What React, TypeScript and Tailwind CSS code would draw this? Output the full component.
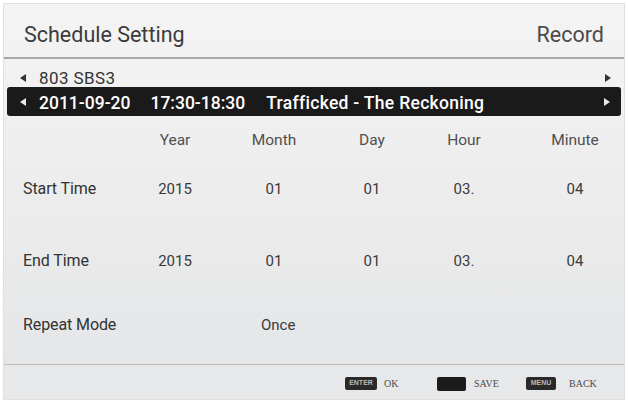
// Schedule setting screen (TV recorder menu)

const LeftArrow = ({ className }: { className: string }) => (
  <svg width="6" height="8" viewBox="0 0 6 8" className={className}>
    <path d="M6 0 L0 4 L6 8 Z" fill="currentColor" />
  </svg>
);

const RightArrow = ({ className }: { className: string }) => (
  <svg width="6" height="8" viewBox="0 0 6 8" className={className}>
    <path d="M0 0 L6 4 L0 8 Z" fill="currentColor" />
  </svg>
);

// Types
interface Row {
  label: string;
  values: string[];
  rowClass: string;
}

const rows: Row[] = [
  { label: "Start Time", values: ["2015", "01", "01", "03.", "04"], rowClass: "mt-[29px]" },
  { label: "End Time", values: ["2015", "01", "01", "03.", "04"], rowClass: "mt-[52px]" },
];

const Cells = ({ values, textClass }: { values: string[]; textClass: string }) => (
  <>
    <div className={`w-[100px] shrink-0 text-center ${textClass}`}>{values[0]}</div>
    <div className={`w-[98px] shrink-0 text-center ${textClass}`}>{values[1]}</div>
    <div className={`w-[98px] shrink-0 text-center ${textClass}`}>{values[2]}</div>
    <div className={`w-[86px] shrink-0 text-center ${textClass}`}>{values[3]}</div>
    <div className={`ml-[38px] w-[60px] shrink-0 text-center ${textClass}`}>{values[4]}</div>
  </>
);

const App = () => {
  return (
    <div className="w-[628px] h-[406px] bg-white p-[3px] pb-[6px] font-['Roboto',sans-serif] overflow-hidden">
      <div className="h-full flex flex-col bg-gradient-to-b from-[#f4f4f4] via-[#ececec] to-[#e3e5e7] border border-[#e0e0e0]">
        {/* Header */}
        <div className="h-[55px] shrink-0 flex items-start justify-between pt-[18px] pl-[20px] pr-[20px] border-b-2 border-[#a8a8a8]">
          <span className="text-[21.5px] leading-[26px] text-[#3b3b3b]">Schedule Setting</span>
          <span className="text-[21.5px] leading-[26px] text-[#4a4a4a]">Record</span>
        </div>

        {/* Channel row */}
        <div className="mt-[10px] h-[18px] flex items-center pl-[16px] pr-[13px]">
          <LeftArrow className="text-[#333]" />
          <span className="ml-[13px] text-[17px] leading-[20px] tracking-[0.4px] text-[#333]">803 SBS3</span>
          <RightArrow className="ml-auto text-[#333]" />
        </div>

        {/* Selected programme */}
        <div className="mx-[3px] h-[29px] shrink-0 flex items-center rounded-[3px] bg-[#1b1a1a] pl-[13px] pr-[11px] text-white">
          <LeftArrow className="text-[#e8e8e8]" />
          <span className="ml-[13px] text-[17.5px] font-medium leading-[20px] pt-[2px]">2011-09-20</span>
          <span className="ml-[20px] text-[17.5px] font-medium leading-[20px] pt-[2px]">17:30-18:30</span>
          <span className="ml-[21px] text-[17.5px] font-medium leading-[20px] pt-[2px] tracking-[0.3px]">Trafficked - The Reckoning</span>
          <RightArrow className="ml-auto text-[#e8e8e8]" />
        </div>

        {/* Column headers */}
        <div className="mt-[14px] h-[20px] flex items-center pl-[19px]">
          <div className="w-[102px] shrink-0" />
          <Cells values={["Year", "Month", "Day", "Hour", "Minute"]} textClass="text-[15.5px] leading-[20px] text-[#505050]" />
        </div>

        {/* Start / End rows */}
        {rows.map((row) => (
          <div key={row.label} className={`${row.rowClass} h-[20px] flex items-center pl-[19px]`}>
            <div className="w-[102px] shrink-0 text-[16px] leading-[20px] text-[#333] tracking-[-0.1px]">{row.label}</div>
            <Cells values={row.values} textClass="text-[15px] leading-[20px] text-[#3a3a3a]" />
          </div>
        ))}

        {/* Repeat mode */}
        <div className="mt-[44px] h-[20px] flex items-center pl-[19px]">
          <div className="w-[102px] shrink-0 text-[16px] leading-[20px] text-[#333] tracking-[-0.1px]">Repeat Mode</div>
          <div className="ml-[136px] text-[15px] leading-[20px] text-[#3a3a3a]">Once</div>
        </div>

        <div className="flex-1" />

        {/* Footer */}
        <div className="h-[35px] shrink-0 flex items-center justify-end pr-[24px] pt-[3px] border-t border-[#bdbdbd] bg-[#e7e8ea] font-['Liberation_Serif',serif] text-[10px] text-[#4a4a4a]">
          <span className="w-[32px] h-[13px] flex items-center justify-center rounded-[2px] bg-[#2a2a2a] text-[7px] text-[#bbb] font-['Liberation_Sans',sans-serif] font-bold">ENTER</span>
          <span className="ml-[7px] w-[17px]">OK</span>
          <span className="ml-[36px] w-[29px] h-[14px] rounded-[2px] bg-[#1c1c1c]" />
          <span className="ml-[8px] w-[29px]">SAVE</span>
          <span className="ml-[23px] w-[30px] h-[13px] flex items-center justify-center rounded-[2px] bg-[#2a2a2a] text-[7px] text-[#bbb] font-['Liberation_Sans',sans-serif] font-bold">MENU</span>
          <span className="ml-[13px] w-[31px]">BACK</span>
        </div>
      </div>
    </div>
  );
};

export default App;
